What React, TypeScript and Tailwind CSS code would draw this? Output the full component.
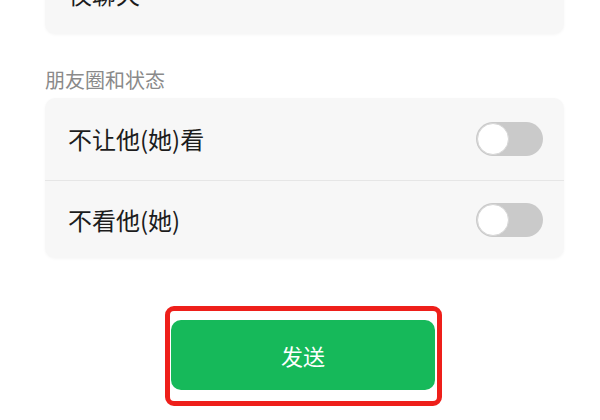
import React from "react";

function Toggle() {
  return (
    <div className="relative h-[34px] w-[67px] rounded-full bg-[#cacaca]">
      <div className="absolute left-[1px] top-[1px] h-[32px] w-[32px] rounded-full border border-[#d6d6d6] bg-white" />
    </div>
  );
}

function Row({ label, h }: { label: string; h: string }) {
  return (
    <div className={`flex items-center justify-between pl-[23px] pr-[21px] ${h}`}>
      <span className="text-[24px] leading-none text-[#1c1c1c]">{label}</span>
      <Toggle />
    </div>
  );
}

export default function App() {
  return (
    <div
      className="h-[420px] w-[600px] overflow-hidden bg-white"
      style={{ fontFamily: '"Noto Sans CJK SC", "Noto Sans", sans-serif' }}
    >
      <div className="ml-[45px] mt-[-46px] flex h-[80px] w-[519px] items-center rounded-[10px] bg-[#f7f7f7] pl-[23px] shadow-[0_1px_3px_rgba(0,0,0,0.04)]">
        <span className="text-[24px] leading-none text-[#1c1c1c]">仅聊天</span>
      </div>
      <div className="ml-[45px] mt-[32px] h-[28px] text-[20px] leading-[28px] text-[#8a8a8a]">
        朋友圈和状态
      </div>
      <div className="ml-[45px] mt-[4px] w-[519px] rounded-[10px] bg-[#f7f7f7] shadow-[0_1px_3px_rgba(0,0,0,0.04)]">
        <Row label="不让他(她)看" h="h-[82px]" />
        <div className="h-px bg-[#e6e6e6]" />
        <Row label="不看他(她)" h="h-[77px]" />
      </div>
      <div className="ml-[165px] mt-[48px] w-[277px] rounded-[9px] border-[5px] border-[#ee1f1a] pb-[11px] pl-[1px] pr-[2px] pt-[9px]">
        <div className="flex h-[70px] items-center justify-center rounded-[10px] bg-[#16b95a]">
          <span className="text-[22px] leading-none text-white">发送</span>
        </div>
      </div>
    </div>
  );
}
